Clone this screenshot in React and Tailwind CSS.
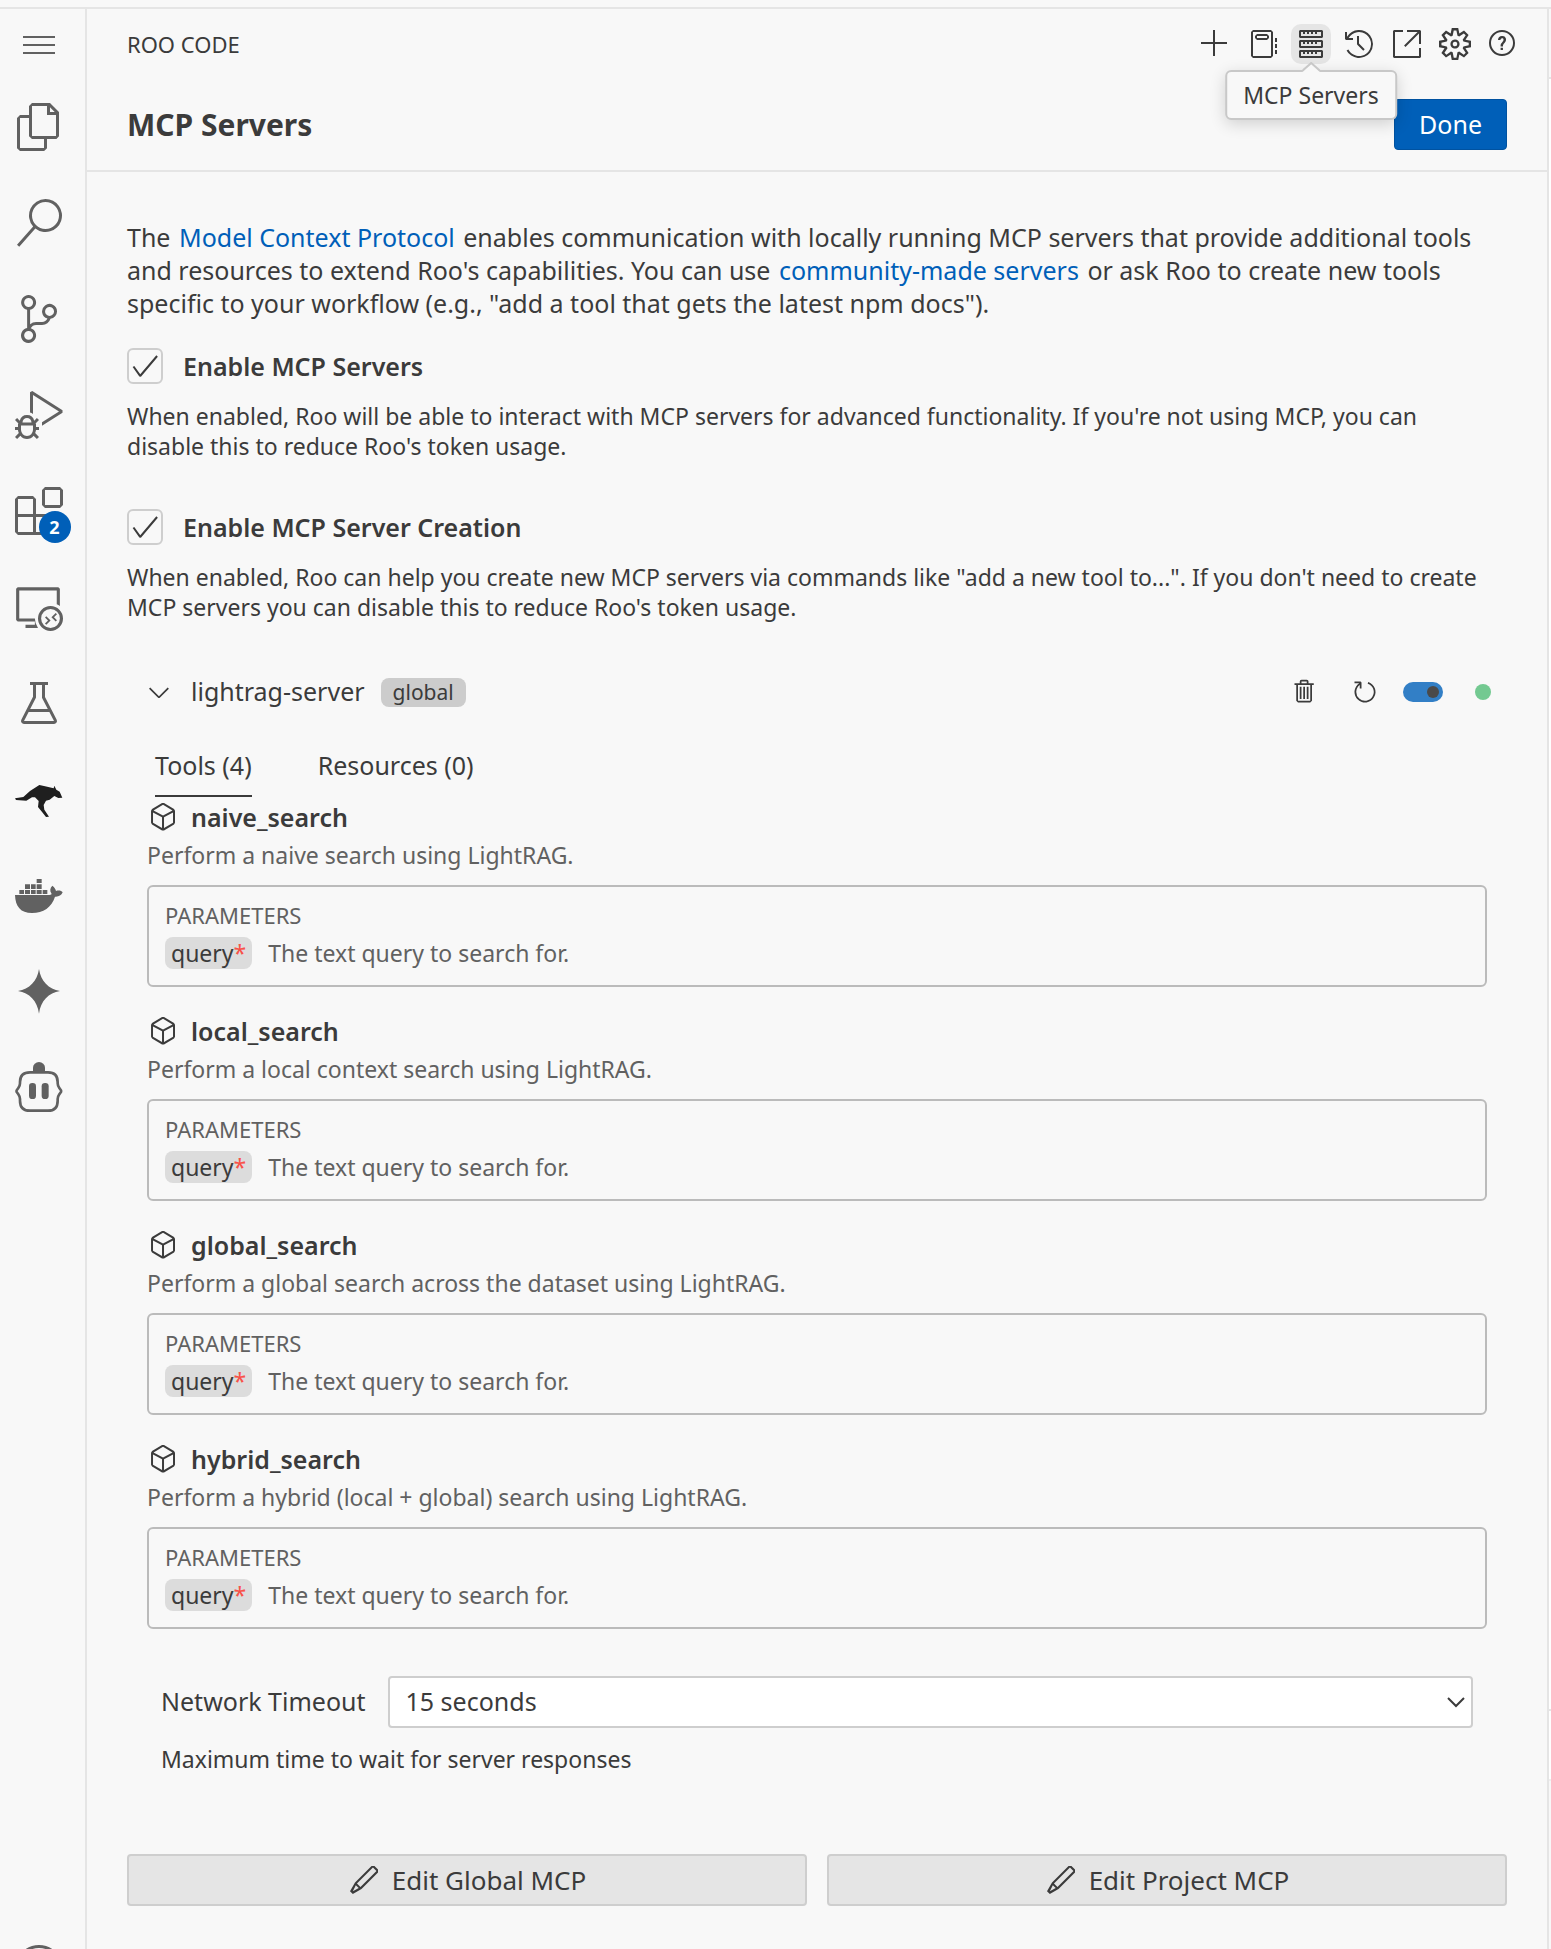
import React, { useState } from "react";
import {
  VscMenu, VscFiles, VscSearch, VscSourceControl, VscDebugAlt, VscExtensions,
  VscRemoteExplorer, VscBeaker, VscAdd, VscNotebook, VscServer, VscHistory,
  VscLinkExternal, VscSettingsGear, VscQuestion, VscTrash, VscRefresh,
  VscSymbolMethod, VscEdit, VscCheck, VscChevronDown, VscAccount,
} from "react-icons/vsc";

function KangarooIcon() {
  return (
    <svg viewBox="45 45 144 144" className="size-12 text-[#1f1f1f]" fill="currentColor" aria-hidden="true">
      <path d="M45 115 L70 111 L90 93 L118 75 L132 78 L161 85 L163 77 L169 89 L179 95 L187 113 L175 114 L163 108 L149 119 L138 122 L131 135 L133 149 L147 170 L138 171 L128 158 L114 141 L116 123 L105 112 L96 112 L79 122 L48 120 Z" />
    </svg>
  );
}

function DockerIcon() {
  return (
    <svg viewBox="45 333 144 144" className="size-12" fill="currentColor" aria-hidden="true">
      <path d="M58 390h14v12h-14z M75 390h15v12h-15z M93 390h14v12h-14z M110 390h15v12h-15z M128 390h14v12h-14z M75 373h15v14h-15z M93 373h14v14h-14z M110 373h15v14h-15z M110 357h15v12h-15z" />
      <path d="M45 405H148C153 405 156 403 154 400C149 393 150 384 157 377C164 382 167 388 168 393C177 390 184 392 188 397C184 407 175 411 165 410C155 442 130 459 96 459C62 459 46 440 45 405Z" />
    </svg>
  );
}

function SparkIcon() {
  return (
    <svg viewBox="45 621 144 144" className="size-12" fill="currentColor" aria-hidden="true">
      <path d="M117 627C122 663 146 688 180 693C146 698 122 723 117 761C112 723 88 698 54 693C88 688 112 663 117 627Z" />
    </svg>
  );
}

function BotIcon() {
  return (
    <svg viewBox="45 909 144 144" className="size-12 overflow-visible" fill="currentColor" aria-hidden="true">
      <path
        d="M90 937H144Q173 937 173 966V970Q173 977 178 984L183 991Q184 993 183 996L178 1003Q173 1010 173 1017V1022Q173 1052 144 1052H90Q60 1052 60 1022V1017Q60 1010 55 1003L50 996Q49 993 50 991L55 984Q60 977 60 970V966Q60 937 90 937Z"
        fill="none" stroke="currentColor" strokeWidth="8"
      />
      <path d="M99 937V923A18 17 0 0 1 135 923V937Z" />
      <rect x="87" y="969" width="21" height="48" rx="10" />
      <rect x="125" y="969" width="21" height="48" rx="10" />
    </svg>
  );
}

const activities = [
  { label: "Explorer", icon: <VscFiles className="size-12" /> },
  { label: "Search", icon: <VscSearch className="size-12" /> },
  { label: "Source Control", icon: <VscSourceControl className="size-12" /> },
  { label: "Run and Debug", icon: <VscDebugAlt className="size-12" /> },
  { label: "Extensions", icon: <VscExtensions className="size-12" />, badge: "2" },
  { label: "Remote Explorer", icon: <VscRemoteExplorer className="size-12" /> },
  { label: "Testing", icon: <VscBeaker className="size-12" /> },
  { label: "Roo Code", icon: <KangarooIcon /> },
  { label: "Docker", icon: <DockerIcon /> },
  { label: "Assist", icon: <SparkIcon /> },
  { label: "Bot", icon: <BotIcon /> },
];

const actions = [
  { label: "New Task", Icon: VscAdd },
  { label: "Prompts", Icon: VscNotebook },
  { label: "MCP Servers", Icon: VscServer, active: true },
  { label: "History", Icon: VscHistory },
  { label: "Open in Editor", Icon: VscLinkExternal },
  { label: "Settings", Icon: VscSettingsGear },
  { label: "Help", Icon: VscQuestion },
];

const tools = [
  { name: "naive_search", description: "Perform a naive search using LightRAG." },
  { name: "local_search", description: "Perform a local context search using LightRAG." },
  { name: "global_search", description: "Perform a global search across the dataset using LightRAG." },
  { name: "hybrid_search", description: "Perform a hybrid (local + global) search using LightRAG." },
];

function ActivityBar() {
  return (
    <nav aria-label="Activity bar" className="flex w-[87px] shrink-0 flex-col items-center overflow-hidden border-r-2 border-[#e5e5e5] pr-2 text-[#616161]">
      <button type="button" aria-label="Menu" className="flex h-[70px] shrink-0 items-center justify-center">
        <VscMenu className="size-8" />
      </button>
      {activities.map(({ label, icon, badge }) => (
        <button key={label} type="button" aria-label={label} className="flex h-24 shrink-0 items-center justify-center">
          <span className="relative">
            {icon}
            {badge && (
              <span className="absolute -right-2 -bottom-2 flex size-8 items-center justify-center rounded-full bg-[#005fb8] text-[18px] font-bold text-white">
                {badge}
              </span>
            )}
          </span>
        </button>
      ))}
      <button type="button" aria-label="Accounts" className="mt-auto -mb-11 shrink-0">
        <VscAccount className="size-12" />
      </button>
    </nav>
  );
}

function Tooltip({ children }) {
  return (
    <span role="tooltip" className="absolute top-[46px] left-1/2 z-10 -translate-x-1/2 rounded-md border-2 border-[#c8c8c8] bg-[#f8f8f8] px-4 py-2 text-[23px] leading-[30px] whitespace-nowrap shadow-[0_4px_16px_rgba(0,0,0,0.16)]">
      {children}
      <svg viewBox="0 0 18 10" className="absolute -top-[10px] left-1/2 h-[10px] w-[18px] -translate-x-1/2" aria-hidden="true">
        <path d="M0 10L9 1L18 10Z" fill="#f8f8f8" />
        <path d="M0 9L9 1L18 9" fill="none" stroke="#c8c8c8" strokeWidth="2" />
      </svg>
    </span>
  );
}

function CheckSetting({ id, label, children }) {
  const [checked, setChecked] = useState(true);
  return (
    <div>
      <div className="flex items-center gap-5">
        <span className="grid size-9 shrink-0 place-items-center">
          <input
            id={id} type="checkbox" checked={checked} onChange={(e) => setChecked(e.target.checked)}
            className="col-start-1 row-start-1 size-9 appearance-none rounded-md border-2 border-[#cecece]"
          />
          {checked && <VscCheck className="pointer-events-none col-start-1 row-start-1 size-8" />}
        </span>
        <label htmlFor={id} className="text-[25px] leading-9 font-semibold">{label}</label>
      </div>
      <p className="mt-[17px] pr-3 text-[23px] leading-[30px]">{children}</p>
    </div>
  );
}

function Tool({ name, description }) {
  return (
    <li>
      <div className="flex items-center gap-3 text-[25px] leading-10 font-semibold">
        <VscSymbolMethod className="size-8" />
        {name}
      </div>
      <p className="text-[23px] leading-9 text-[#616161]">{description}</p>
      <div className="mt-3 flex flex-col gap-[6px] rounded-md border-2 border-[#bbbbbb] px-4 pt-3 pb-4 text-[#616161]">
        <h3 className="text-[22px] leading-8 uppercase">Parameters</h3>
        <div className="flex items-center gap-4 text-[23px] leading-8">
          <code className="rounded-lg bg-[#dcdcdc] px-[6px] font-['Noto_Sans',sans-serif] text-[#3b3b3b]">
            query<span className="text-[#f85149]">*</span>
          </code>
          <span>The text query to search for.</span>
        </div>
      </div>
    </li>
  );
}

function EditButton({ children }) {
  return (
    <button type="button" className="flex h-[52px] items-center justify-center gap-3 rounded-sm border-2 border-[#cecece] bg-[#e5e5e5] text-[26px]">
      <VscEdit className="size-8" />
      {children}
    </button>
  );
}

export default function App() {
  const [enabled, setEnabled] = useState(true);
  return (
    <div className="flex h-screen flex-col overflow-hidden bg-[#f8f8f8] font-['Noto_Sans',sans-serif] text-[25px] text-[#3b3b3b]">
      <div className="h-[9px] shrink-0 border-b-2 border-[#e5e5e5]" />
      <div className="flex min-h-0 flex-1">
        <ActivityBar />
        <main className="flex min-w-0 flex-1 flex-col border-r-2 border-[#e5e5e5]">
          <div className="flex h-[70px] shrink-0 items-center justify-between pr-6 pl-10">
            <h1 className="text-[22px]">ROO CODE</h1>
            <div className="flex gap-2">
              {actions.map(({ label, Icon, active }) => (
                <span key={label} className="relative">
                  <button
                    type="button" aria-label={label}
                    className={active ? "flex size-10 items-center justify-center rounded-[10px] bg-[#e5e5e5]" : "flex size-10 items-center justify-center rounded-[10px]"}
                  >
                    <Icon className="size-8" />
                  </button>
                  {active && <Tooltip>{label}</Tooltip>}
                </span>
              ))}
            </div>
          </div>

          <header className="flex shrink-0 items-center justify-between border-b-2 border-[#e5e5e5] px-10 pt-5 pb-5">
            <h2 className="text-[30px] leading-10 font-bold">MCP Servers</h2>
            <button type="button" className="h-[51px] rounded-sm border border-[#0052a0] bg-[#005fb8] px-6 text-[25px] text-white">Done</button>
          </header>

          <div className="min-h-0 flex-1 overflow-x-hidden overflow-y-auto px-10 pt-[49px]">
            <p className="leading-[33px]">
              The <a href="#protocol" className="px-[2px] text-[#005fb8]">Model Context Protocol</a> enables communication
              with locally running MCP servers that provide additional tools and resources to extend Roo's
              capabilities. You can use <a href="#community" className="px-[2px] text-[#005fb8]">community-made servers</a> or
              ask Roo to create new tools specific to your workflow (e.g., "add a tool that gets the latest npm docs").
            </p>

            <div className="mt-7 flex flex-col gap-12">
              <CheckSetting id="enable-servers" label="Enable MCP Servers">
                When enabled, Roo will be able to interact with MCP servers for advanced functionality. If you're not
                using MCP, you can disable this to reduce Roo's token usage.
              </CheckSetting>
              <CheckSetting id="enable-creation" label="Enable MCP Server Creation">
                When enabled, Roo can help you create new MCP servers via commands like "add a new tool to...". If you
                don't need to create MCP servers you can disable this to reduce Roo's token usage.
              </CheckSetting>
            </div>

            <section className="mt-[46px]">
              <div className="flex h-12 items-center px-4">
                <button type="button" aria-label="Collapse server" className="mr-4"><VscChevronDown className="size-8" /></button>
                <span className="mr-4">lightrag-server</span>
                <span className="rounded-lg bg-[#cccccc] px-3 text-[21px] leading-[29px]">global</span>
                <button type="button" aria-label="Delete server" className="ml-auto px-4"><VscTrash className="size-7" /></button>
                <button type="button" aria-label="Restart server" className="px-4"><VscRefresh className="size-7" /></button>
                <button
                  type="button" role="switch" aria-checked={enabled} aria-label="Server enabled" onClick={() => setEnabled(!enabled)}
                  className={enabled ? "ml-2 flex h-5 w-10 items-center justify-end rounded-full bg-[#327fc6] px-1" : "ml-2 flex h-5 w-10 items-center rounded-full bg-[#cccccc] px-1"}
                >
                  <span className="size-3 rounded-full bg-[#4a4a4a]" />
                </button>
                <span className="ml-8 size-4 rounded-full bg-[#73c991]" />
              </div>

              <div className="px-5">
                <div role="tablist" className="mt-7 flex gap-[66px] pl-2">
                  <button type="button" role="tab" aria-selected="true" className="h-[53px] border-b-2 border-[#3b3b3b] pb-2">Tools (4)</button>
                  <button type="button" role="tab" aria-selected="false" className="h-[53px] border-b-2 border-transparent pb-2">Resources (0)</button>
                </div>

                <ul className="flex flex-col gap-6">
                  {tools.map((tool) => <Tool key={tool.name} {...tool} />)}
                </ul>

                <div className="mt-[47px] px-[14px]">
                  <div className="flex items-center gap-[22px]">
                    <label htmlFor="timeout">Network Timeout</label>
                    <span className="grid flex-1 items-center">
                      <select id="timeout" defaultValue="15" className="col-start-1 row-start-1 h-[52px] w-full appearance-none rounded-sm border-2 border-[#cecece] bg-white px-4">
                        <option value="15">15 seconds</option>
                        <option value="30">30 seconds</option>
                        <option value="60">1 minute</option>
                      </select>
                      <svg viewBox="0 0 18 11" className="pointer-events-none col-start-1 row-start-1 mr-2 h-[11px] w-[18px] justify-self-end" fill="none" stroke="currentColor" strokeWidth="2" aria-hidden="true">
                        <path d="M1 1L9 9L17 1" />
                      </svg>
                    </span>
                  </div>
                  <p className="mt-4 text-[23px] leading-[30px]">Maximum time to wait for server responses</p>
                </div>
              </div>
            </section>

            <div className="mt-20 grid grid-cols-2 gap-5">
              <EditButton>Edit Global MCP</EditButton>
              <EditButton>Edit Project MCP</EditButton>
            </div>
          </div>
        </main>
        <div className="flex w-[2px] shrink-0 flex-col">
          <div className="h-[70px] border-b-2 border-[#e5e5e5]" />
          <div className="flex-1 border-b-2 border-[#e5e5e5] bg-white" />
          <div className="h-[70px] border-b-2 border-[#eeeeee] bg-white" />
          <div className="h-[168px]" />
        </div>
      </div>
    </div>
  );
}
